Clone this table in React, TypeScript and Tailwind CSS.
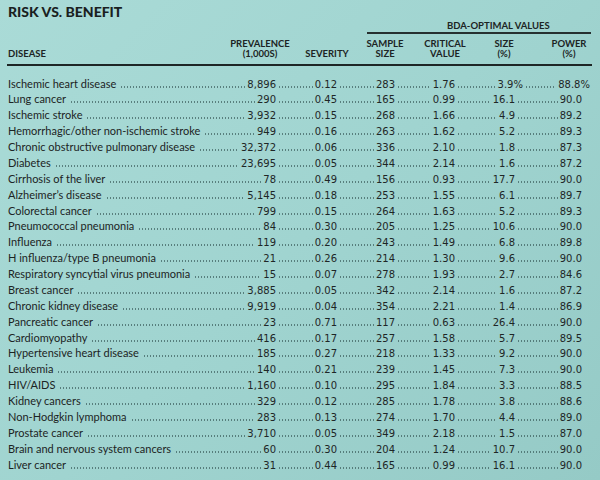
import React from 'react';

type Row = [string, string, string, string, string, string, string];

const rows: Row[] = [
  ['Ischemic heart disease', '8,896', '0.12', '283', '1.76', '3.9', '88.8'],
  ['Lung cancer', '290', '0.45', '165', '0.99', '16.1', '90.0'],
  ['Ischemic stroke', '3,932', '0.15', '268', '1.66', '4.9', '89.2'],
  ['Hemorrhagic/other non-ischemic stroke', '949', '0.16', '263', '1.62', '5.2', '89.3'],
  ['Chronic obstructive pulmonary disease', '32,372', '0.06', '336', '2.10', '1.8', '87.3'],
  ['Diabetes', '23,695', '0.05', '344', '2.14', '1.6', '87.2'],
  ['Cirrhosis of the liver', '78', '0.49', '156', '0.93', '17.7', '90.0'],
  ['Alzheimer’s disease', '5,145', '0.18', '253', '1.55', '6.1', '89.7'],
  ['Colorectal cancer', '799', '0.15', '264', '1.63', '5.2', '89.3'],
  ['Pneumococcal pneumonia', '84', '0.30', '205', '1.25', '10.6', '90.0'],
  ['Influenza', '119', '0.20', '243', '1.49', '6.8', '89.8'],
  ['H influenza/type B pneumonia', '21', '0.26', '214', '1.30', '9.6', '90.0'],
  ['Respiratory syncytial virus pneumonia', '15', '0.07', '278', '1.93', '2.7', '84.6'],
  ['Breast cancer', '3,885', '0.05', '342', '2.14', '1.6', '87.2'],
  ['Chronic kidney disease', '9,919', '0.04', '354', '2.21', '1.4', '86.9'],
  ['Pancreatic cancer', '23', '0.71', '117', '0.63', '26.4', '90.0'],
  ['Cardiomyopathy', '416', '0.17', '257', '1.58', '5.7', '89.5'],
  ['Hypertensive heart disease', '185', '0.27', '218', '1.33', '9.2', '90.0'],
  ['Leukemia', '140', '0.21', '239', '1.45', '7.3', '90.0'],
  ['HIV/AIDS', '1,160', '0.10', '295', '1.84', '3.3', '88.5'],
  ['Kidney cancers', '329', '0.12', '285', '1.78', '3.8', '88.6'],
  ['Non-Hodgkin lymphoma', '283', '0.13', '274', '1.70', '4.4', '89.0'],
  ['Prostate cancer', '3,710', '0.05', '349', '2.18', '1.5', '87.0'],
  ['Brain and nervous system cancers', '60', '0.30', '204', '1.24', '10.7', '90.0'],
  ['Liver cancer', '31', '0.44', '165', '0.99', '16.1', '90.0'],
];

const Leader = ({ className = '' }: { className?: string }) => (
  <span
    className={`flex-1 h-[2px] bg-[radial-gradient(circle,rgba(40,70,70,0.6)_0.5px,transparent_0.9px)] bg-[length:3px_2px] bg-repeat-x ${className}`}
  />
);

const Num = ({ v, pct }: { v: string; pct?: boolean }) => (
  <span className="font-['DejaVu_Sans',sans-serif] text-[10px] text-[#1e2626] whitespace-nowrap">
    {v}
    {pct && <span className="-mr-[8px]">%</span>}
  </span>
);

const Head = ({ w, children }: { w: string; children: React.ReactNode }) => (
  <div className={`${w} text-center`}>{children}</div>
);

const App: React.FC = () => {
  return (
    <div className="w-[600px] h-[480px] overflow-hidden bg-[linear-gradient(135deg,#aadbd7_0%,#a0d4d0_50%,#95cac6_100%)] text-[#1c2424] font-['Lato',sans-serif] px-[8px]">
      {/* Title */}
      <h1 className="pt-[4px] text-[14px] leading-[16px] font-black text-[#1a1f1f]">RISK VS. BENEFIT</h1>

      {/* BDA group heading */}
      <div className="ml-[359px] w-[224px] pl-[80px] text-[9.5px] leading-[11px] font-bold">BDA-OPTIMAL VALUES</div>
      <div className="ml-[359px] w-[224px] h-[1.5px] mt-[1px] bg-[#263030]" />

      {/* Column heads */}
      <div className="flex items-end mt-[5px] text-[9.5px] leading-[10.5px] font-bold pb-[4px]">
        <div className="w-[220px]">DISEASE</div>
        <Head w="w-[64px]">PREVALENCE<br />(1,000S)</Head>
        <Head w="w-[70px]">SEVERITY</Head>
        <Head w="w-[46px]">SAMPLE<br />SIZE</Head>
        <Head w="w-[74px]">CRITICAL<br />VALUE</Head>
        <Head w="w-[44px]">SIZE<br />(%)</Head>
        <div className="w-[22px]" />
        <Head w="w-[42px]">POWER<br />(%)</Head>
      </div>
      <div className="w-[585px] -ml-[1px] h-[2px] bg-[#1e2626]" />

      {/* Rows */}
      <div className="mt-[10px] w-[574px]">
        {rows.map((r, i) => (
          <div key={r[0]} className="flex items-baseline h-[15.875px]">
            <div className="flex-1 flex items-baseline min-w-0">
              <span className="text-[11px] whitespace-nowrap">{r[0]}</span>
              <Leader className="ml-[4px] mr-[2px]" />
              <Num v={r[1]} />
            </div>
            <div className="w-[61px] flex items-baseline">
              <Leader className="mx-[2px]" />
              <Num v={r[2]} />
            </div>
            <div className="w-[58px] flex items-baseline">
              <Leader className="mx-[2px]" />
              <Num v={r[3]} />
            </div>
            <div className="w-[60px] flex items-baseline">
              <Leader className="mx-[2px]" />
              <Num v={r[4]} />
            </div>
            <div className="w-[60px] flex items-baseline">
              <Leader className="mx-[2px]" />
              <Num v={r[5]} pct={i === 0} />
            </div>
            <div className="w-[67px] flex items-baseline">
              <Leader className={i === 0 ? 'ml-[10px] mr-[2px]' : 'mx-[2px]'} />
              <Num v={r[6]} pct={i === 0} />
            </div>
          </div>
        ))}
      </div>
    </div>
  );
};

export default App;
